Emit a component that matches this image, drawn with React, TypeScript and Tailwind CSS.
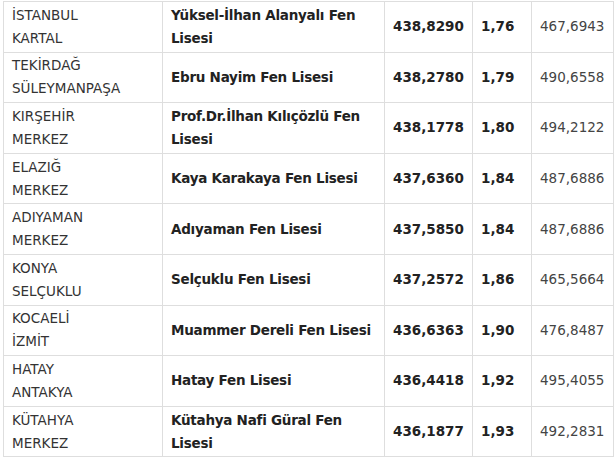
import React from "react";

const rows = [
  ["İSTANBUL", "KARTAL", "Yüksel-İlhan Alanyalı Fen Lisesi", "438,8290", "1,76", "467,6943"],
  ["TEKİRDAĞ", "SÜLEYMANPAŞA", "Ebru Nayim Fen Lisesi", "438,2780", "1,79", "490,6558"],
  ["KIRŞEHİR", "MERKEZ", "Prof.Dr.İlhan Kılıçözlü Fen Lisesi", "438,1778", "1,80", "494,2122"],
  ["ELAZIĞ", "MERKEZ", "Kaya Karakaya Fen Lisesi", "437,6360", "1,84", "487,6886"],
  ["ADIYAMAN", "MERKEZ", "Adıyaman Fen Lisesi", "437,5850", "1,84", "487,6886"],
  ["KONYA", "SELÇUKLU", "Selçuklu Fen Lisesi", "437,2572", "1,86", "465,5664"],
  ["KOCAELİ", "İZMİT", "Muammer Dereli Fen Lisesi", "436,6363", "1,90", "476,8487"],
  ["HATAY", "ANTAKYA", "Hatay Fen Lisesi", "436,4418", "1,92", "495,4055"],
  ["KÜTAHYA", "MERKEZ", "Kütahya Nafi Güral Fen Lisesi", "436,1877", "1,93", "492,2831"],
];

export default function App() {
  return (
    <div className="w-[614px] h-[457px] bg-white overflow-hidden pl-[3px] pt-[1px]" style={{ fontFamily: '"DejaVu Sans", Verdana, sans-serif' }}>
      <table className="border-collapse table-fixed w-[610px] text-[13.5px] leading-[23px]">
        <colgroup>
          <col className="w-[159px]" />
          <col className="w-[222px]" />
          <col className="w-[88px]" />
          <col className="w-[59px]" />
          <col className="w-[82px]" />
        </colgroup>
        <tbody>
          {rows.map((r, i) => (
            <tr key={i} className="h-[50.6px]">
              <td className="border border-[#dedede] px-[8px] py-0 text-[#333] align-middle">
                {r[0]}
                <br />
                {r[1]}
              </td>
              <td className="border border-[#dedede] pl-[8px] pr-[4px] py-0 font-bold text-[#222] align-middle tracking-[-0.25px]">{r[2]}</td>
              <td className="border border-[#dedede] px-[8px] py-0 font-bold text-[#222] align-middle">{r[3]}</td>
              <td className="border border-[#dedede] px-[8px] py-0 font-bold text-[#222] align-middle">{r[4]}</td>
              <td className="border border-[#dedede] px-[8px] py-0 text-[#444] align-middle">{r[5]}</td>
            </tr>
          ))}
        </tbody>
      </table>
    </div>
  );
}
